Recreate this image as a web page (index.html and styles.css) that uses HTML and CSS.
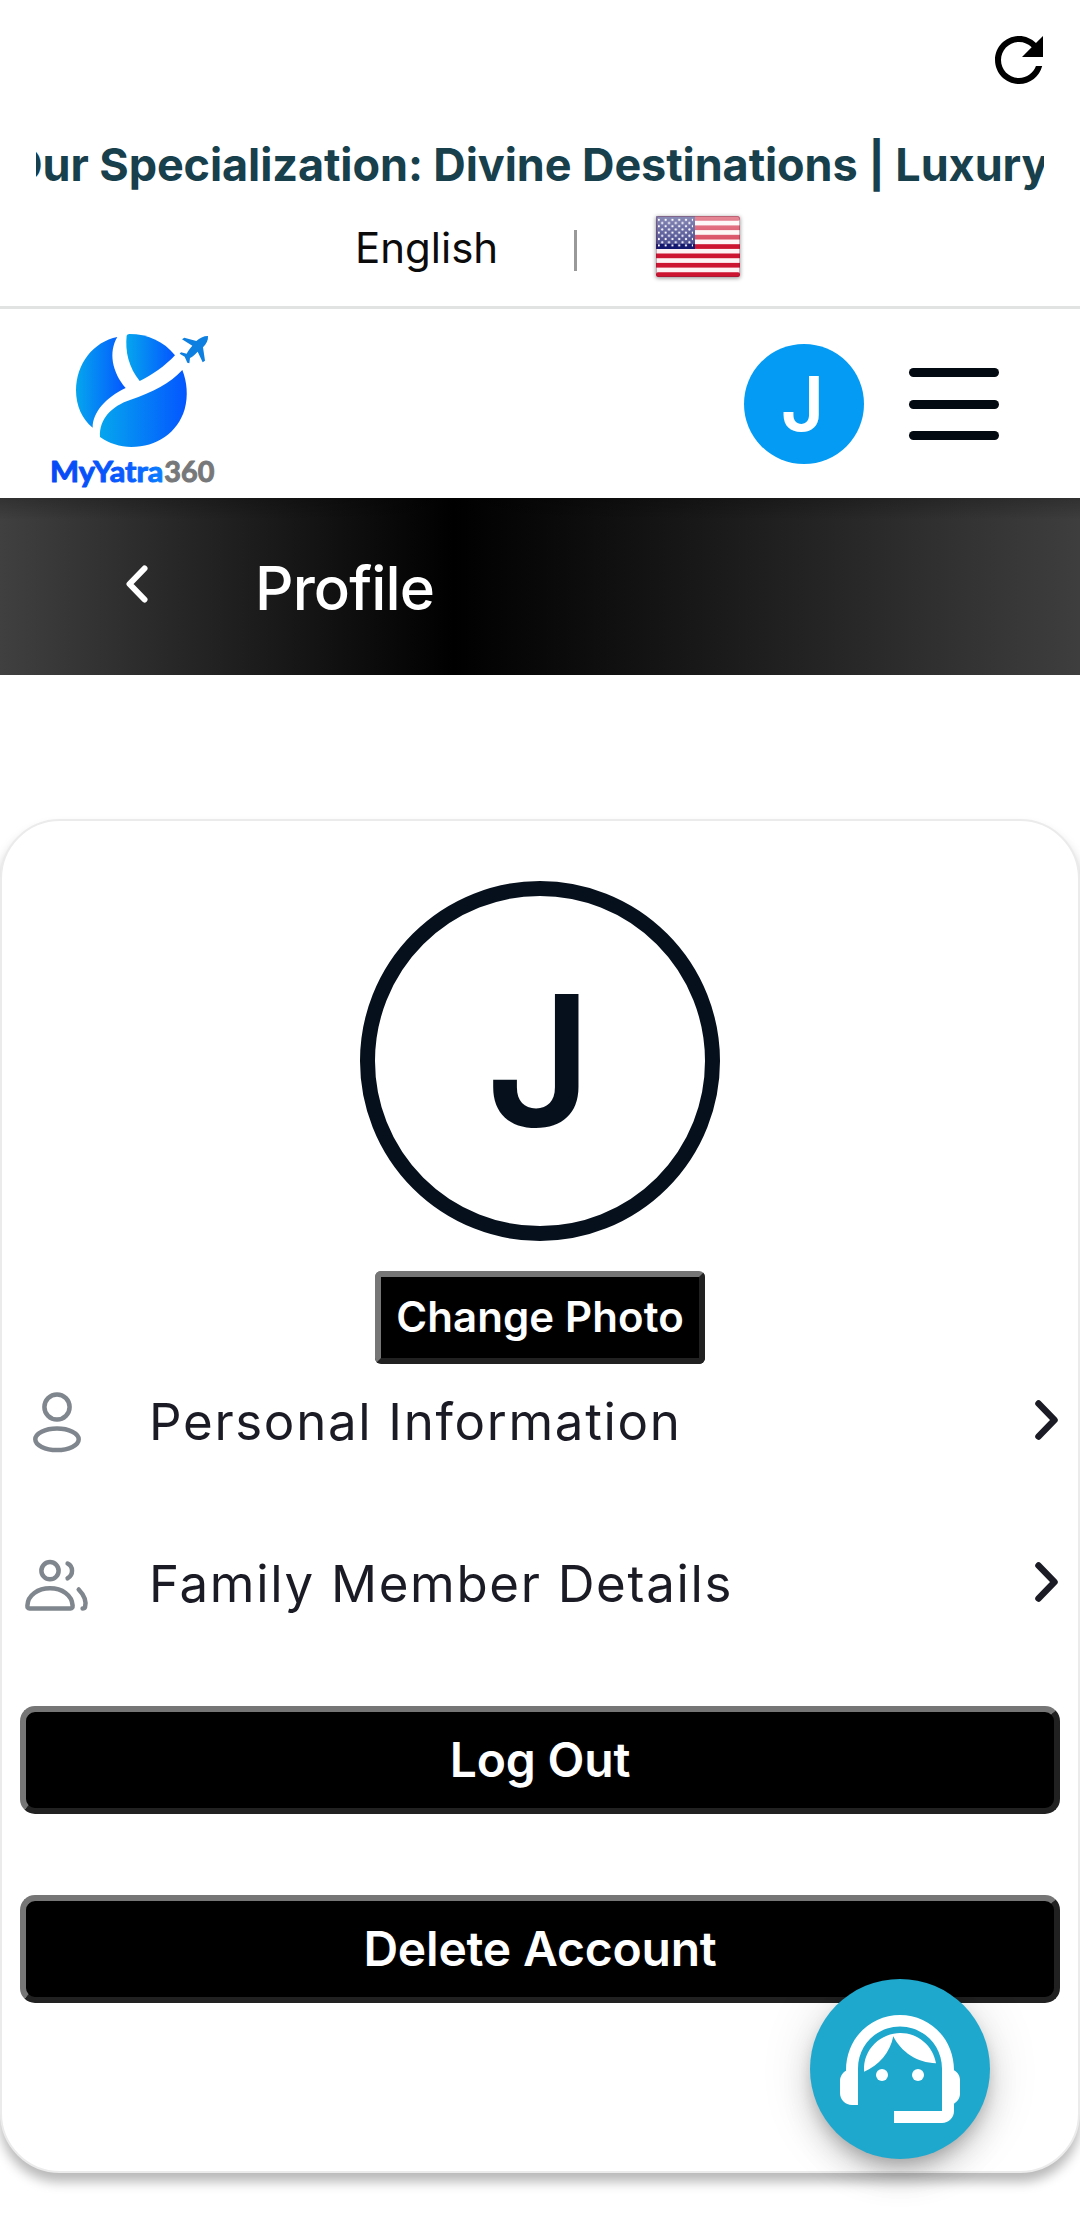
FILE: index.html
```html
<!DOCTYPE html>
<html lang="en">
<head>
<meta charset="utf-8">
<title>Profile - MyYatra360</title>
<link rel="stylesheet" href="styles.css">
</head>
<body>
<div class="topbar">
  <div class="refresh-row">
    <svg class="refresh" viewBox="0 0 24 24"><path d="M17.65 6.35C16.2 4.9 14.21 4 12 4c-4.42 0-7.99 3.58-7.99 8s3.57 8 7.99 8c3.73 0 6.84-2.55 7.73-6h-2.08c-.82 2.33-3.04 4-5.65 4-3.31 0-6-2.69-6-6s2.69-6 6-6c1.66 0 3.14.69 4.22 1.78L13 11h7V4l-2.35 2.35z"/></svg>
  </div>
  <div class="marquee"><span class="marquee-text">Our Specialization: Divine Destinations | Luxury</span></div>
  <div class="lang-row">
    <span class="lang">English</span>
    <span class="divider"></span>
    <svg class="flag" viewBox="0 0 84 62">
      <defs>
        <linearGradient id="gloss" x1="0" y1="0" x2="0" y2="1"><stop offset="0" stop-color="#fff" stop-opacity=".5"/><stop offset="1" stop-color="#fff" stop-opacity=".22"/></linearGradient>
        <pattern id="stars" width="6.8" height="6.4" patternUnits="userSpaceOnUse" x="1" y="2"><circle cx="1.8" cy="1.8" r="1.1" fill="#fff"/><circle cx="5.2" cy="5" r="1.1" fill="#fff"/></pattern>
      </defs>
      <rect width="84" height="61" rx="2" fill="#fdf3f4"/>
      <g fill="#cd1430">
        <rect width="84" height="4.7" rx="2"/><rect y="9.4" width="84" height="4.7"/><rect y="18.8" width="84" height="4.7"/><rect y="28.2" width="84" height="4.7"/><rect y="37.5" width="84" height="4.7"/><rect y="46.9" width="84" height="4.7"/><rect y="56.3" width="84" height="4.7" rx="2"/>
      </g>
      <rect width="39" height="33" fill="#15186f"/>
      <rect x="2" y="2" width="35" height="29" fill="url(#stars)"/>
      <rect width="84" height="28" fill="url(#gloss)"/>
      <rect x=".5" y=".5" width="83" height="60" rx="2" fill="none" stroke="#70203c" stroke-opacity=".35"/>
    </svg>
  </div>
</div>

<header class="header">
  <svg class="logo" viewBox="0 0 660 564">
    <defs>
      <linearGradient id="ga" x1="0" x2="1"><stop offset="0" stop-color="#05a6ee"/><stop offset="1" stop-color="#0456ff"/></linearGradient>
      <linearGradient id="gt" x1="0" x2="1"><stop offset="0" stop-color="#0648f5"/><stop offset=".7" stop-color="#0a5cff"/><stop offset="1" stop-color="#0a80ff"/></linearGradient>
    </defs>
    <g fill="url(#ga)">
      <path d="M262 81C190 95 138 162 138 241C138 286 156 328 188 353C188 306 228 262 287 234C246 186 235 126 262 81Z"/>
      <path d="M290 77Q291 72 298 72C352 72 402 94 435 136C405 168 368 194 329 213C296 172 285 124 290 77Z"/>
      <path d="M457 180C471 215 475 258 464 298C442 370 380 411 304 411C270 411 237 400 210 381C207 328 245 288 300 270C370 246 420 220 457 180Z"/>
    </g>
    <path fill="#0d7fe0" d="M534 78C520 78 509 84 499 93L463 83L456 88L487 107C480 115 474 123 470 131L453 127L449 131L464 140L472 158L478 160L480 144C488 140 495 134 503 125L518 157L525 152L519 112C529 102 535 91 534 78Z"/>
    <text x="60" y="516" class="logo-text" fill="url(#gt)" stroke="url(#gt)" textLength="340" lengthAdjust="spacingAndGlyphs">MyYatra</text>
    <text x="403" y="516" class="logo-text" fill="#77787a" stroke="#77787a" textLength="150" lengthAdjust="spacingAndGlyphs">360</text>
  </svg>
  <div class="header-actions">
    <div class="avatar-sm">J</div>
    <div class="menu"><i></i><i></i><i></i></div>
  </div>
</header>

<div class="titlebar">
  <svg class="back" viewBox="0 0 22 38"><path d="M18.5 3.5L3.5 19L18.5 34.5"/></svg>
  <h1 class="title">Profile</h1>
</div>

<main class="card">
  <div class="avatar-lg">J</div>
  <button class="btn btn-photo">Change Photo</button>
  <div class="row">
    <svg class="row-icon" viewBox="0 0 80 80"><circle cx="40" cy="27" r="12.6"/><ellipse cx="40" cy="59.3" rx="21.7" ry="10.8"/></svg>
    <span class="row-label">Personal Information</span>
    <svg class="chev" viewBox="0 0 24 40"><path d="M3.5 3.5L19.5 20L3.5 36.5"/></svg>
  </div>
  <div class="row">
    <svg class="row-icon" viewBox="0 1 80 80"><circle cx="33" cy="29.7" r="8.6"/><path d="M50.6 22.6C56.500 25.500 56.500 34 50.600 37.300M61.700 48.500C68 55 69.500 61 68 66.300Q67.500 67.600 65.600 67.600"/><path d="M12.500 67.600Q10.300 67.600 10.400 64.500C10.800 54 21 47.300 33 47.300S55 54 55.600 64.500Q55.700 67.600 53.500 67.600Z"/></svg>
    <span class="row-label">Family Member Details</span>
    <svg class="chev" viewBox="0 0 24 40"><path d="M3.5 3.5L19.5 20L3.5 36.5"/></svg>
  </div>
  <button class="btn btn-wide">Log Out</button>
  <button class="btn btn-wide">Delete Account</button>
</main>

<div class="fab">
  <svg viewBox="0 0 24 24"><path d="M21 12.22C21 6.73 16.74 3 12 3c-4.69 0-9 3.65-9 9.28-.6.34-1 .98-1 1.72v2c0 1.1.9 2 2 2h1v-6.1c0-3.87 3.13-7 7-7s7 3.13 7 7V19h-8v2h8c1.1 0 2-.9 2-2v-1.22c.59-.31 1-.92 1-1.64v-2.3c0-.7-.41-1.31-1-1.62z"/><circle cx="9" cy="13" r="1"/><circle cx="15" cy="13" r="1"/><path d="M18 11.03C17.52 8.18 15.04 6 12.05 6c-3.03 0-6.29 2.51-6.03 6.45 2.47-1.01 4.33-3.21 4.86-5.89 1.31 2.63 4 4.44 7.12 4.47z"/></svg>
</div>
</body>
</html>
```
FILE: styles.css
```css
* { box-sizing: border-box; }
body {
  margin: 0;
  width: 1080px;
  height: 2228px;
  position: relative;
  overflow: hidden;
  background: #fff;
  font-family: Inter, "Liberation Sans", sans-serif;
}
svg { display: block; flex: none; }

.topbar { height: 309px; border-bottom: 3px solid #e1e3e2; }
.refresh-row { display: flex; justify-content: flex-end; padding: 24px 25px 0 0; height: 134px; }
.refresh { width: 72px; height: 72px; }
.marquee { margin: 0 36px; height: 62px; line-height: 62px; overflow: hidden; white-space: nowrap; }
.marquee-text { margin-left: -28px; font-size: 45px; font-weight: 700; letter-spacing: -.1px; color: #173f4c; }
.lang-row { display: flex; align-items: center; height: 102px; padding-left: 355px; }
.lang { font-size: 42px; color: #0b0b0b; width: 219px; }
.divider { width: 3px; height: 41px; background: #999; margin: 7px 79px 0 0; }
.flag { width: 84px; height: 62px; filter: drop-shadow(0 1px 2px rgba(0,0,0,.45)); }

.header { display: flex; justify-content: space-between; align-items: flex-end; height: 189px; padding: 0 81px 0 30px; }
.logo { width: 220px; height: 188px; }
.logo-text { font-family: Lato, sans-serif; font-weight: 700; font-size: 86px; stroke-width: 3px; stroke-linejoin: round; }
.header-actions { display: flex; align-items: center; gap: 45px; height: 188px; }
.avatar-sm {
  width: 120px; height: 120px; border-radius: 50%;
  background: #039bf3; color: #fff; padding-right: 3px;
  font-size: 75px; font-weight: 600; line-height: 120px; text-align: center;
}
.menu { display: flex; flex-direction: column; justify-content: space-between; width: 90px; height: 72px; }
.menu i { height: 9px; border-radius: 5px; background: #030a12; }

.titlebar {
  display: flex; align-items: center; height: 177px; padding-left: 126px;
  background:
    linear-gradient(rgba(0,0,0,.22), transparent 22px),
    linear-gradient(90deg, #404040, #000 42%, #3e3e3e);
}
.back { width: 22px; height: 38px; margin-top: -5px; }
.back path { fill: none; stroke: #fff; stroke-width: 6; stroke-linecap: round; stroke-linejoin: round; }
.title { margin: 3px 0 0 107px; font-size: 60px; font-weight: 500; line-height: 72px; letter-spacing: -.85px; color: #fff; }

.card {
  display: flex; flex-direction: column; align-items: center;
  height: 1354px; margin-top: 144px; padding: 60px 18px 0;
  border: 2px solid #ebebeb; border-radius: 60px;
  background: #fff; box-shadow: 0 9px 12px rgba(0,0,0,.28);
}
.avatar-lg {
  width: 360px; height: 360px; border: 15px solid #06101c; border-radius: 50%;
  color: #06101c; font-size: 182px; font-weight: 600; line-height: 328px; text-align: center; padding-right: 2px;
}
.btn {
  padding: 0 0 2px; font-family: inherit; font-weight: 600; color: #fff; background: #000;
  border: 6px solid; border-color: #767676 #212121 #212121 #767676; flex: none;
}
.btn-photo { width: 330px; height: 93px; margin-top: 30px; border-radius: 6px; font-size: 42px; letter-spacing: .1px; }
.btn-wide { width: 1040px; height: 108px; margin-top: 81px; border-radius: 15px; font-size: 48px; letter-spacing: -.2px; padding-bottom: 2px; }
.row { display: flex; align-items: center; width: 1040px; height: 80px; margin-top: 16px; padding-right: 1px; }
.row + .row { margin-top: 82px; }
.row-icon { width: 80px; height: 80px; margin-left: -3px; fill: none; stroke: #80868d; stroke-width: 4.5; stroke-linecap: round; stroke-linejoin: round; }
.row-label { flex: 1; margin-left: 52px; padding-top: 2px; font-size: 51px; letter-spacing: 1.68px; color: #1b1b25; }
.chev { width: 24px; height: 40px; margin-top: 0; fill: none; stroke: #1b1b25; stroke-width: 6.5; stroke-linecap: round; stroke-linejoin: round; }
.row + .btn-wide { margin-top: 84px; }

.fab {
  position: absolute; left: 810px; top: 1979px; width: 180px; height: 180px; border-radius: 50%;
  background: #1ea8cd; display: flex; align-items: center; justify-content: center;
  box-shadow: 0 9px 15px -3px rgba(0,0,0,.2), 0 18px 30px rgba(0,0,0,.14), 0 3px 54px rgba(0,0,0,.12);
}
.fab svg { width: 144px; height: 144px; fill: #fff; }
```
